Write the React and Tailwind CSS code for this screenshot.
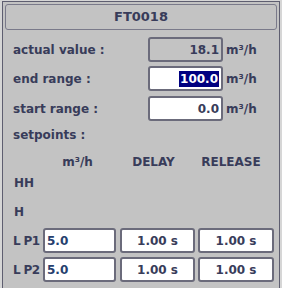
const font = { fontFamily: '"DejaVu Sans", Verdana, sans-serif' }

const Field = ({ className = "", children }) => (
  <div className={`h-[25px] rounded-[3px] border-2 border-[#6b6b7b] flex items-center px-[2px] ${className}`}>
    {children}
  </div>
)

const SetRow = ({ label, value }) => (
  <div className="mt-[4px] flex h-[25px] items-center">
    <div className="w-[40px] shrink-0 pl-[10px] whitespace-nowrap tracking-[-0.6px]">{label}</div>
    <Field className="w-[73px] bg-white text-[#26406e]">{value}</Field>
    <Field className="ml-[4px] w-[75px] bg-white justify-center">1.00 s</Field>
    <Field className="ml-[3px] w-[76px] bg-white justify-center">1.00 s</Field>
  </div>
)

const App = () => {
  return (
    <div className="w-[282px] h-[288px] overflow-hidden bg-[#d6d6d6] pt-[1px]" style={font}>
      <div className="ml-[2px] w-[278px] h-[287px] bg-[#c3c3c3] border-l border-r border-t border-[#5e5e70] text-[12px] font-bold text-[#383c5a]">
        <div className="mx-[2px] mt-[2px] h-[26px] rounded-[3px] border border-[#7a7a8a] flex items-center justify-center text-[13px]">
          FT0018
        </div>

        <div className="mt-[7px] flex h-[25px] items-center">
          <div className="w-[145px] pl-[10px]">actual value :</div>
          <Field className="w-[75px] bg-[#c3c3c3] justify-end">18.1</Field>
          <span className="ml-[3px]">m³/h</span>
        </div>
        <div className="mt-[4px] flex h-[25px] items-center">
          <div className="w-[145px] pl-[10px]">end range :</div>
          <Field className="w-[75px] bg-white justify-end">
            <span className="bg-[#000080] text-white px-[1px] leading-[16px]">100.0</span>
          </Field>
          <span className="ml-[3px]">m³/h</span>
        </div>
        <div className="mt-[5px] flex h-[25px] items-center">
          <div className="w-[145px] pl-[10px]">start range :</div>
          <Field className="w-[75px] bg-white justify-end">0.0</Field>
          <span className="ml-[3px]">m³/h</span>
        </div>

        <div className="mt-[4px] h-[20px] flex items-center pl-[10px]">setpoints :</div>

        <div className="mt-[9px] flex h-[16px] items-center">
          <div className="w-[40px] shrink-0" />
          <div className="w-[73px] text-center pr-[4px]">m³/h</div>
          <div className="ml-[4px] w-[75px] text-center pr-[8px]">DELAY</div>
          <div className="ml-[3px] w-[76px] text-center pr-[10px]">RELEASE</div>
        </div>

        <div className="flex h-[25px] items-center pl-[11px]">HH</div>
        <div className="mt-[4px] flex h-[25px] items-center pl-[11px]">H</div>
        <SetRow label="L P1" value="5.0" />
        <SetRow label="L P2" value="5.0" />
      </div>
    </div>
  )
}

export default App
